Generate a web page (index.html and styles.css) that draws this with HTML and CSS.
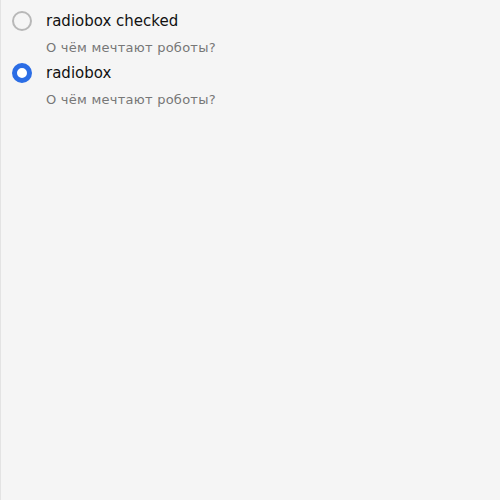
FILE: index.html
```html
<!DOCTYPE html>
<html>
<head>
<meta charset="utf-8">
<link rel="stylesheet" href="styles.css">
</head>
<body>
<div class="page">
  <label class="radio">
    <span class="control"></span>
    <span class="texts">
      <span class="label">radiobox checked</span>
      <span class="hint">О чём мечтают роботы?</span>
    </span>
  </label>
  <label class="radio">
    <span class="control checked"></span>
    <span class="texts">
      <span class="label">radiobox</span>
      <span class="hint">О чём мечтают роботы?</span>
    </span>
  </label>
</div>
</body>
</html>
```
FILE: styles.css
```css
html, body {
  margin: 0;
  padding: 0;
  height: 100%;
  background: #f5f5f5;
}
.page {
  box-sizing: border-box;
  height: 100%;
  border-left: 1px solid #e3e3e3;
  padding: 11px 0 0 11px;
  display: flex;
  flex-direction: column;
  gap: 6px;
  font-family: "DejaVu Sans", sans-serif;
}
.radio {
  display: flex;
  align-items: flex-start;
  gap: 14px;
}
.control {
  box-sizing: border-box;
  width: 20px;
  height: 20px;
  border-radius: 50%;
  border: 2px solid #b8b8b8;
  background: transparent;
  flex: none;
}
.control.checked {
  border: 5px solid #2b6de5;
  background: #fff;
}
.texts {
  display: flex;
  flex-direction: column;
}
.label {
  font-size: 15px;
  line-height: 21px;
  color: #111;
}
.hint {
  margin-top: 6px;
  font-size: 13px;
  line-height: 19px;
  letter-spacing: 0.25px;
  color: #777;
}
```
